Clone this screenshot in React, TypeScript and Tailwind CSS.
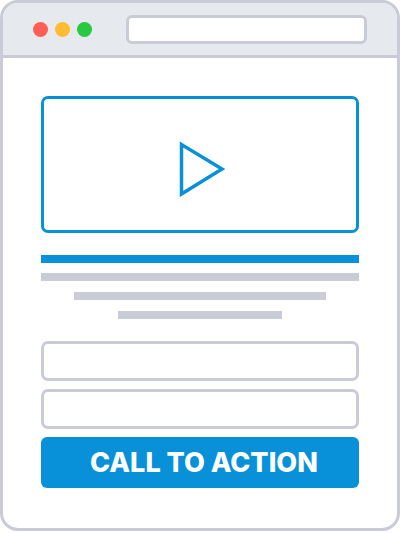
export default function App() {
  return (
    <div className="w-[400px] h-[533px] bg-white">
      <div className="h-[531px] w-full border-[3px] border-[#c9ccd6] rounded-[18px] overflow-hidden flex flex-col">
        <div className="h-[55px] shrink-0 bg-[#e6e9ed] border-b-[3px] border-[#c9ccd6] flex items-center pl-[30px] pr-[30px]">
          <div className="flex gap-[7px]">
            <div className="w-[15px] h-[15px] rounded-full bg-[#ff5f57]" />
            <div className="w-[15px] h-[15px] rounded-full bg-[#febc2e]" />
            <div className="w-[15px] h-[15px] rounded-full bg-[#28c840]" />
          </div>
          <div className="ml-auto w-[241px] h-[29px] bg-white border-[3px] border-[#c9ccd6] rounded-[6px]" />
        </div>
        <div className="flex flex-col px-[38px] pt-[38px]">
          <div className="h-[137px] border-[3px] border-[#0891d9] rounded-[7px] flex items-center justify-center">
            <svg width="50" height="56" viewBox="0 0 50 56" className="ml-[5px] mt-[8px]">
              <polygon points="3.5,3.5 3.5,53 44,28" fill="none" stroke="#0891d9" strokeWidth="3.5" />
            </svg>
          </div>
          <div className="h-[8px] bg-[#0891d9] mt-[22px]" />
          <div className="h-[8px] bg-[#c9ccd6] mt-[10px]" />
          <div className="h-[8px] w-[252px] bg-[#c9ccd6] mt-[11px] self-center" />
          <div className="h-[8px] w-[164px] bg-[#c9ccd6] mt-[11px] self-center" />
          <div className="h-[40px] border-[3px] border-[#c9ccd6] rounded-[7px] mt-[22px]" />
          <div className="h-[40px] border-[3px] border-[#c9ccd6] rounded-[7px] mt-[8px]" />
          <div className="h-[51px] bg-[#0891d9] rounded-[6px] mt-[8px] flex items-center justify-center">
            <span className="text-white text-[27px] font-extrabold tracking-[0px] leading-none pl-[8px]" style={{ fontFamily: "Inter, 'Open Sans', sans-serif" }}>
              CALL TO ACTION
            </span>
          </div>
        </div>
      </div>
    </div>
  );
}
